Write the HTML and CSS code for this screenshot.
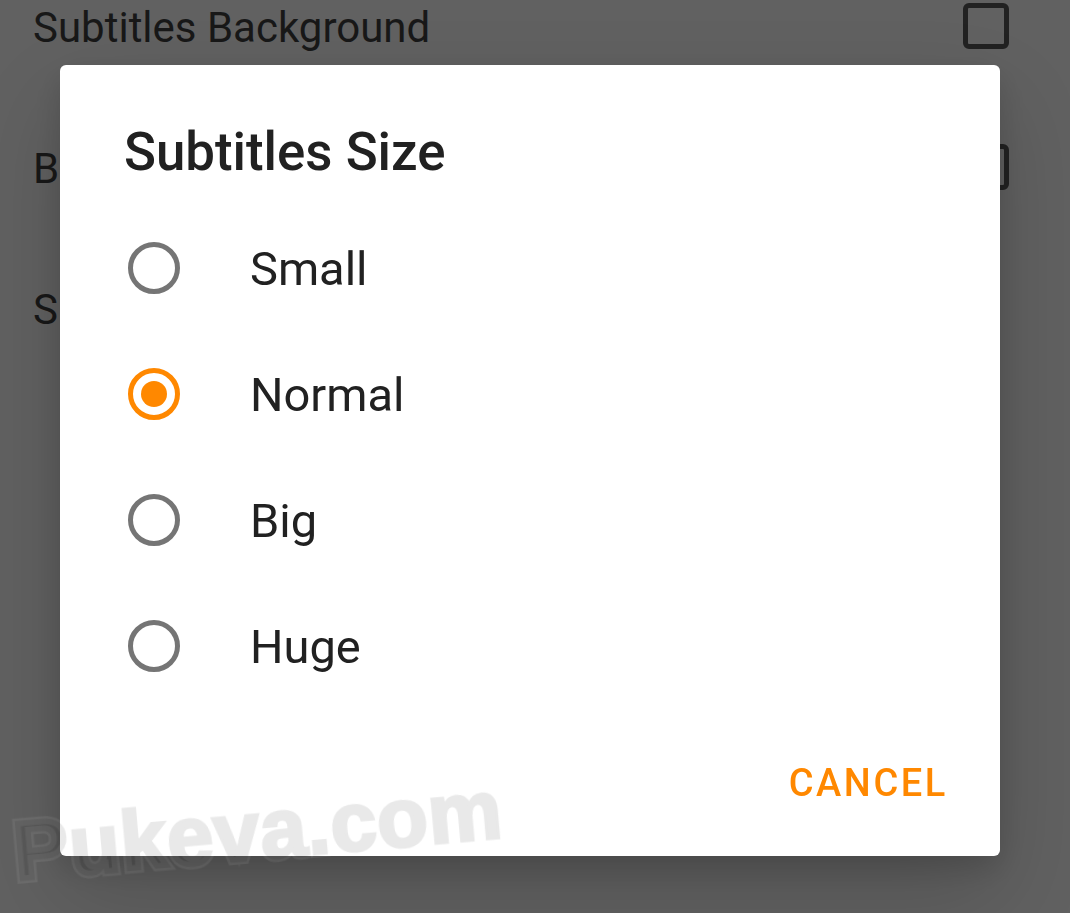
FILE: index.html
```html
<!DOCTYPE html>
<html>
<head>
<meta charset="utf-8">
<link rel="stylesheet" href="styles.css">
</head>
<body>
<div class="settings">
  <div class="row"><span class="label">Subtitles Background</span><span class="checkbox"></span></div>
  <div class="row"><span class="label">Bold subtitles</span><span class="checkbox"></span></div>
  <div class="row"><span class="label">Subtitles size</span></div>
</div>

<div class="dialog">
  <h1 class="title">Subtitles Size</h1>
  <ul class="options">
    <li class="option"><span class="radio"></span><span class="opt-label">Small</span></li>
    <li class="option"><span class="radio checked"></span><span class="opt-label">Normal</span></li>
    <li class="option"><span class="radio"></span><span class="opt-label">Big</span></li>
    <li class="option"><span class="radio"></span><span class="opt-label">Huge</span></li>
  </ul>
  <div class="actions"><span class="btn">CANCEL</span></div>
</div>

<div class="watermark-outline" aria-hidden="true"></div>
<div class="watermark">Pukeva.com</div>
</body>
</html>
```

FILE: styles.css
```css
html, body {
  margin: 0;
  padding: 0;
  width: 1070px;
  height: 913px;
  overflow: hidden;
  background: #616161;
  font-family: Roboto, "Noto Sans", sans-serif;
}

.settings {
  margin-top: -45px;
}

.row {
  height: 141px;
  display: flex;
  align-items: center;
  justify-content: space-between;
  padding: 0 61px 0 33px;
}

.label {
  font-size: 42px;
  color: #181818;
  margin-top: 4px;
}

.checkbox {
  width: 36px;
  height: 36px;
  border: 5px solid #222222;
  border-radius: 6px;
}

.dialog {
  position: fixed;
  left: 60px;
  top: 65px;
  width: 940px;
  height: 791px;
  background: #ffffff;
  border-radius: 6px;
  box-shadow: 0 40px 90px rgba(0, 0, 0, 0.16), 0 12px 30px rgba(0, 0, 0, 0.14);
  display: flex;
  flex-direction: column;
}

.title {
  margin: 0;
  padding: 57px 0 0 64px;
  height: 60px;
  line-height: 60px;
  font-size: 52.8px;
  font-weight: 500;
  color: #212121;
  margin-bottom: 23px;
}

.options {
  list-style: none;
  margin: 0;
  padding: 0;
}

.option {
  height: 126px;
  display: flex;
  align-items: center;
  padding-left: 68px;
}

.radio {
  box-sizing: border-box;
  width: 52px;
  height: 52px;
  border: 5px solid #757575;
  border-radius: 50%;
  display: flex;
  align-items: center;
  justify-content: center;
  margin-right: 70px;
}

.radio.checked {
  border-color: #ff8800;
}

.radio.checked::after {
  content: "";
  width: 26px;
  height: 26px;
  border-radius: 50%;
  background: #ff8800;
}

.opt-label {
  font-size: 47px;
  color: #212121;
}

.actions {
  display: flex;
  justify-content: flex-end;
  padding: 38px 52px 0 0;
}

.btn {
  height: 72px;
  line-height: 72px;
  font-size: 38px;
  font-weight: 500;
  letter-spacing: 2.6px;
  color: #ff8800;
}

.watermark,
.watermark-outline {
  position: absolute;
  left: 17px;
  top: 811px;
  font-family: "Liberation Sans", Arial, sans-serif;
  font-weight: 700;
  font-size: 83px;
  line-height: 82px;
  letter-spacing: 0.6px;
  transform: rotate(-5deg);
  transform-origin: left bottom;
  white-space: nowrap;
}

.watermark {
  color: #e9e9e9;
  -webkit-text-stroke: 3px #e9e9e9;
  mix-blend-mode: multiply;
}

.watermark-outline::before {
  content: "Pukeva.com";
  color: transparent;
  -webkit-text-stroke: 8px rgba(255, 255, 255, 0.07);
}
```
